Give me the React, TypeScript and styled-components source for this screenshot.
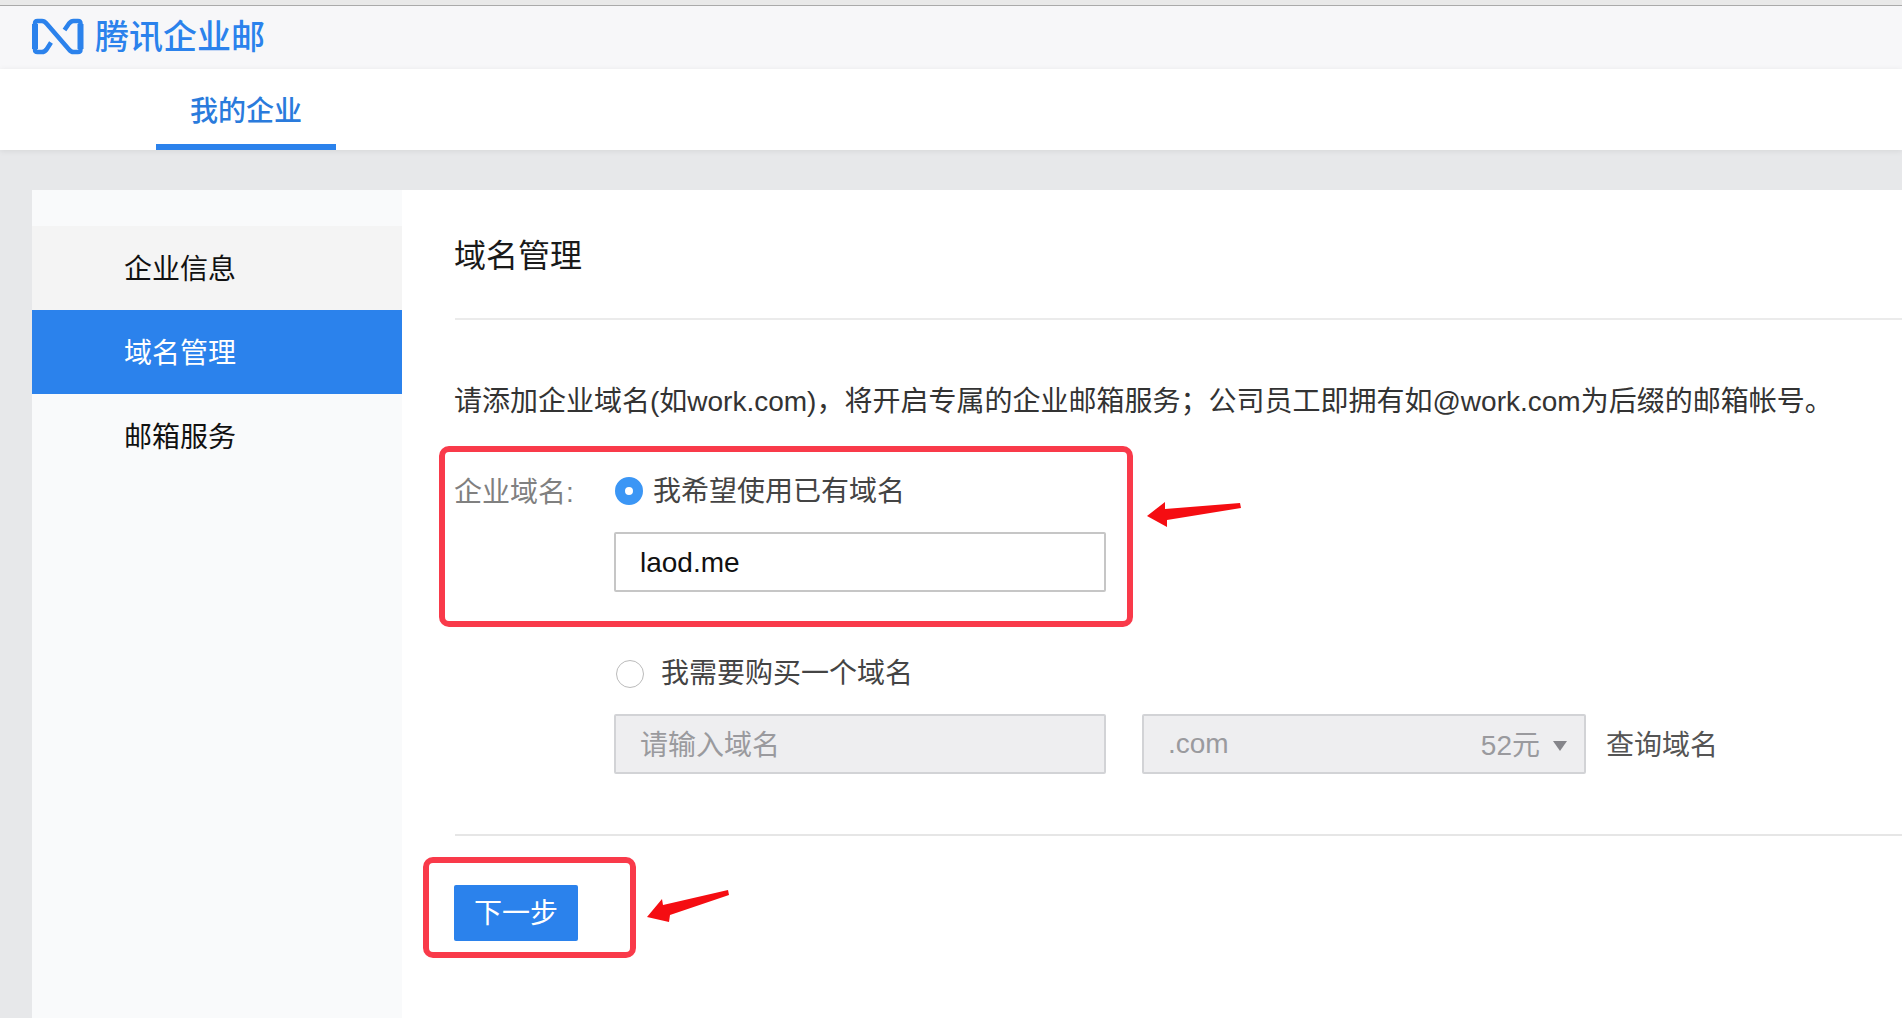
import React from "react";
import styled, { createGlobalStyle } from "styled-components";

const Global = createGlobalStyle`
  html, body { margin: 0; padding: 0; height: 100%; background: #e7e8ea; }
  body { overflow: hidden; font-family: "Liberation Sans", "Noto Sans CJK SC", sans-serif; }
`;

const BLUE = "#2b82ec";

const Page = styled.div`
  width: 1902px;
  height: 1018px;
  display: flex;
  flex-direction: column;
  overflow: hidden;
  position: relative;
`;
const TopStrip = styled.div`
  height: 5px;
  background: #e9e9e9;
  border-bottom: 1px solid #aaaaaa;
  flex: none;
`;
const Brand = styled.header`
  height: 63px;
  flex: none;
  background: #f7f7f9;
  display: flex;
  align-items: center;
  padding-left: 32px;
  gap: 11px;
`;
const LogoMark = styled.svg`
  margin-top: -2px;
`;
const BrandName = styled.span`
  font-size: 34px;
  line-height: 46px;
  margin-top: -2px;
  font-weight: 500;
  color: ${BLUE};
`;
const TabBar = styled.nav`
  height: 81px;
  flex: none;
  background: #fff;
  display: flex;
  padding-left: 156px;
  box-shadow: 0 1px 6px rgba(0, 0, 0, 0.08);
  position: relative;
`;
const Tab = styled.a`
  width: 180px;
  box-sizing: border-box;
  border-bottom: 6px solid ${BLUE};
  padding-top: 5px;
  display: flex;
  align-items: center;
  justify-content: center;
  font-size: 28px;
  font-weight: 500;
  color: #2a7bdc;
`;
const Main = styled.main`
  flex: 1;
  display: flex;
  padding: 40px 0 0 32px;
  min-height: 0;
`;
const Sidebar = styled.aside`
  width: 370px;
  flex: none;
  background: #f9fafb;
  padding-top: 36px;
`;
const MenuItem = styled.div<{ $state?: "hover" | "active" }>`
  height: 84px;
  box-sizing: border-box;
  padding: 0 0 3px 92px;
  display: flex;
  align-items: center;
  font-size: 28px;
  color: ${(p) => (p.$state === "active" ? "#fff" : "#111")};
  background: ${(p) =>
    p.$state === "active" ? BLUE : p.$state === "hover" ? "#f4f4f4" : "transparent"};
`;
const Content = styled.section`
  flex: 1;
  background: #fff;
  padding-left: 53px;
  min-width: 0;
`;
const Title = styled.h1`
  margin: 0;
  height: 130px;
  box-sizing: border-box;
  padding-top: 43px;
  border-bottom: 2px solid #ebebeb;
  font-size: 32px;
  line-height: 46px;
  font-weight: 400;
  color: #1a1a1a;
  text-indent: -1px;
`;
const Intro = styled.p`
  margin: 0;
  padding-top: 62px;
  font-size: 28px;
  line-height: 40px;
  color: #333;
  white-space: nowrap;
  text-indent: -1px;
`;
const FormRow = styled.div<{ $top: number }>`
  display: flex;
  align-items: center;
  margin-top: ${(p) => p.$top}px;
  padding-left: 159px;
  position: relative;
  height: 40px;
`;
const FieldLabel = styled.span`
  position: absolute;
  left: -1px;
  top: 0;
  font-size: 28px;
  color: #808080;
`;
const Radio = styled.span<{ $checked?: boolean }>`
  width: 28px;
  height: 28px;
  border-radius: 50%;
  box-sizing: border-box;
  flex: none;
  margin-top: 2px;
  margin-left: ${(p) => (p.$checked ? 1 : 2)}px;
  ${(p) =>
    p.$checked
      ? `border: 10px solid #3b96f5; background: #fff;`
      : `border: 1px solid #bbbbbb; background: #fff;`}
`;
const RadioText = styled.span<{ $gap: number; $lift: number }>`
  font-size: 28px;
  color: #444;
  margin-left: ${(p) => p.$gap}px;
  padding-bottom: ${(p) => p.$lift}px;
`;
const InputRow = styled.div<{ $top: number }>`
  display: flex;
  align-items: center;
  margin-top: ${(p) => p.$top}px;
  padding-left: 159px;
`;
const Field = styled.div<{ $disabled?: boolean; $width: number }>`
  width: ${(p) => p.$width}px;
  height: 60px;
  box-sizing: border-box;
  border: 2px solid ${(p) => (p.$disabled ? "#d2d3d6" : "#c6c6c6")};
  border-radius: 2px;
  background: ${(p) => (p.$disabled ? "#eeeef0" : "#fff")};
  display: flex;
  align-items: center;
  padding: ${(p) => (p.$disabled ? "0 24px" : "2px 24px 0")};
  font-size: 28px;
  color: ${(p) => (p.$disabled ? "#9a9a9e" : "#111")};
`;
const SelectField = styled(Field)`
  margin-left: 36px;
`;
const Placeholder = styled.span`
  padding-bottom: 2px;
`;
const Suffix = styled.div`
  margin-left: auto;
  display: flex;
  align-items: center;
  gap: 13px;
  margin-right: -7px;
  padding-bottom: 2px;
`;
const Caret = styled.span`
  width: 0;
  height: 0;
  border-left: 7px solid transparent;
  border-right: 7px solid transparent;
  border-top: 10px solid #85858a;
  margin-top: 6px;
`;
const QueryLink = styled.a`
  font-size: 28px;
  color: #555;
  margin-left: 20px;
  padding-bottom: 2px;
`;
const Rule = styled.hr`
  border: 0;
  height: 2px;
  background: #e6e6e6;
  margin: 60px 0 0;
`;
const NextButton = styled.button`
  display: block;
  margin: 49px 0 0 -1px;
  width: 124px;
  height: 56px;
  border: 0;
  border-radius: 2px;
  background: ${BLUE};
  color: #fff;
  font: inherit;
  font-size: 28px;
  padding: 0 0 4px;
`;
const Callout = styled.div<{ $x: number; $y: number; $w: number; $h: number }>`
  position: absolute;
  left: ${(p) => p.$x}px;
  top: ${(p) => p.$y}px;
  width: ${(p) => p.$w}px;
  height: ${(p) => p.$h}px;
  box-sizing: border-box;
  border: 6px solid #f93a4a;
  border-radius: 10px;
`;
const Arrow = styled.svg<{ $x: number; $y: number }>`
  position: absolute;
  left: ${(p) => p.$x}px;
  top: ${(p) => p.$y}px;
`;

const Logo = () => (
  <LogoMark width="52" height="37" viewBox="0 0 52 37" fill="none">
    <path
      d="M19 24.500L14.500 31.500Q12.500 34 10 34H5.500Q3 34 3 31.500V5.500Q3 3 5.500 3H10Q12.500 3 14.500 5.500L37 31.500Q39 34 41.500 34H46Q48.500 34 48.500 31.500V5.500Q48.500 3 46 3H41.500Q39 3 37 5.500L32.500 12"
      stroke={BLUE}
      strokeWidth="4.500"
      strokeLinejoin="round"
    />
    <path d="M3 6V31M48.500 6V31" stroke={BLUE} strokeWidth="6" />
  </LogoMark>
);

export default function App() {
  return (
    <Page>
      <Global />
      <TopStrip />
      <Brand>
        <Logo />
        <BrandName>腾讯企业邮</BrandName>
      </Brand>
      <TabBar>
        <Tab>我的企业</Tab>
      </TabBar>
      <Main>
        <Sidebar>
          <MenuItem $state="hover">企业信息</MenuItem>
          <MenuItem $state="active">域名管理</MenuItem>
          <MenuItem>邮箱服务</MenuItem>
        </Sidebar>
        <Content>
          <Title>域名管理</Title>
          <Intro>请添加企业域名(如work.com)，将开启专属的企业邮箱服务；公司员工即拥有如@work.com为后缀的邮箱帐号。</Intro>
          <FormRow $top={48}>
            <FieldLabel>企业域名:</FieldLabel>
            <Radio $checked />
            <RadioText $gap={10} $lift={3}>我希望使用已有域名</RadioText>
          </FormRow>
          <InputRow $top={22}>
            <Field $width={492}>laod.me</Field>
          </InputRow>
          <FormRow $top={61}>
            <Radio />
            <RadioText $gap={17} $lift={5}>我需要购买一个域名</RadioText>
          </FormRow>
          <InputRow $top={21}>
            <Field $width={492} $disabled>
              <Placeholder>请输入域名</Placeholder>
            </Field>
            <SelectField $width={444} $disabled>
              .com
              <Suffix>
                52元
                <Caret />
              </Suffix>
            </SelectField>
            <QueryLink>查询域名</QueryLink>
          </InputRow>
          <Rule />
          <NextButton>下一步</NextButton>
        </Content>
      </Main>
      <Callout $x={439} $y={446} $w={694} $h={181} />
      <Callout $x={423} $y={857} $w={213} $h={101} />
      <Arrow $x={1146} $y={499} width="96" height="30" viewBox="0 0 96 30">
        <path d="M1 17L19 3L19 10L94 4L95 9L21 21L21 28Z" fill="#f50d12" />
      </Arrow>
      <Arrow $x={645} $y={888} width="86" height="36" viewBox="0 0 86 36">
        <path d="M2 29L17 11L18 17L83 2L84 7L25 27L24 34Z" fill="#f50d12" />
      </Arrow>
    </Page>
  );
}
